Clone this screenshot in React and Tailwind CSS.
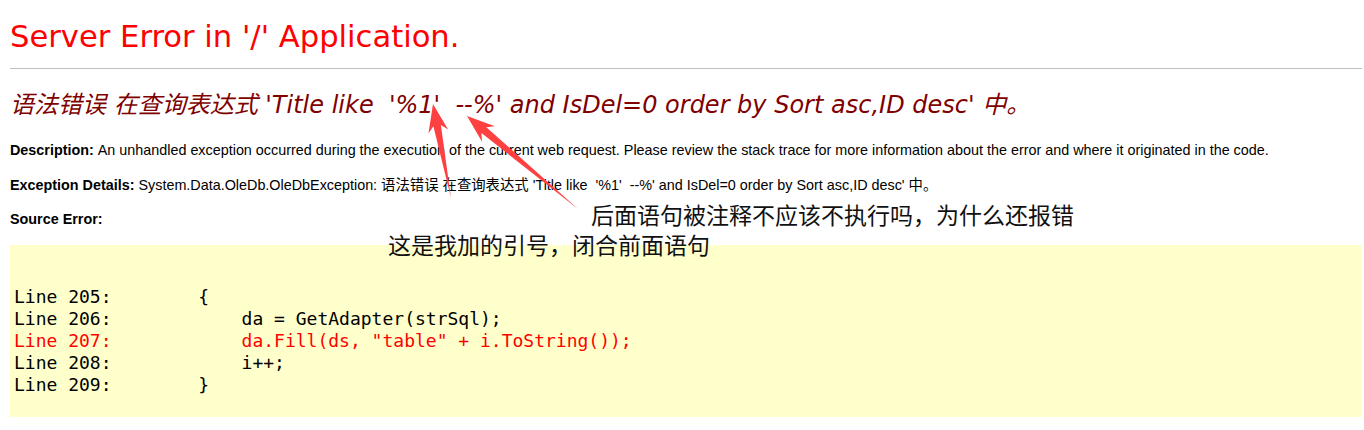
import React from "react";

const verdana = { fontFamily: '"DejaVu Sans", Verdana, "Noto Sans CJK SC", sans-serif' };

function Arrow({ x1, y1, x2, y2 }) {
  const dx = x2 - x1;
  const dy = y2 - y1;
  const len = Math.hypot(dx, dy);
  const ux = dx / len;
  const uy = dy / len;
  const px = -uy;
  const py = ux;
  const headLen = 28;
  const headW = 10;
  const neckW = 3.8;
  const notch = 6;
  const bx = x2 - ux * headLen;
  const by = y2 - uy * headLen;
  const nx = x2 - ux * (headLen - notch);
  const ny = y2 - uy * (headLen - notch);
  const pts = [
    [x1, y1],
    [nx + px * neckW, ny + py * neckW],
    [bx + px * headW, by + py * headW],
    [x2, y2],
    [bx - px * headW, by - py * headW],
    [nx - px * neckW, ny - py * neckW],
  ];
  return (
    <polygon
      points={pts.map((p) => p.join(",")).join(" ")}
      fill="#ff4040"
    />
  );
}

export default function App() {
  return (
    <div className="relative w-[1364px] h-[430px] overflow-hidden bg-white">
      <div className="pl-[10px] pr-[2px]">
        <h1
          className="text-[30.6px] leading-[36px] text-[#ff0000] pt-[19px]"
          style={verdana}
        >
          Server Error in '/' Application.
        </h1>
        <div className="mt-[13px] border-t border-[#c0c0c0]" />
        <h2
          className="mt-[21px] text-[24px] leading-[30px] italic text-[#800000] whitespace-pre"
          style={verdana}
        >
          语法错误 在查询表达式 'Title like  '%1'  --%' and IsDel=0 order by Sort asc,ID desc' 中。
        </h2>
        <div
          className="text-[14.37px] leading-[16px] text-black"
          style={{ fontFamily: '"Liberation Sans", Arial, "Noto Sans CJK SC", sans-serif' }}
        >
          <p className="mt-[22px]">
            <b>Description: </b>An unhandled exception occurred during the execution of the current web request. Please review the stack trace for more information about the error and where it originated in the code.
          </p>
          <p className="mt-[19px] whitespace-pre">
            <b>Exception Details: </b>System.Data.OleDb.OleDbException: 语法错误 在查询表达式 'Title like  '%1'  --%' and IsDel=0 order by Sort asc,ID desc' 中。
          </p>
          <p className="mt-[18px]">
            <b>Source Error:</b>
          </p>
        </div>
        <pre
          className="mt-[18px] bg-[#ffffcc] pl-[4px] pt-[41px] pb-[21px] text-[18px] leading-[22px] text-black"
          style={{ fontFamily: '"DejaVu Sans Mono", "Liberation Mono", monospace' }}
        >
{`Line 205:        {
Line 206:            da = GetAdapter(strSql);
`}<span className="text-[#ff0000]">{`Line 207:            da.Fill(ds, "table" + i.ToString());
`}</span>{`Line 208:            i++;
Line 209:        }`}
        </pre>
      </div>

      <svg className="absolute left-0 top-0" width="1364" height="430">
        <Arrow x1={451} y1={198} x2={433} y2={104} />
        <Arrow x1={578} y1={209} x2={467} y2={116} />
      </svg>

      <div
        className="absolute left-[591px] top-[200px] text-[23px] leading-[28px] text-[#111] whitespace-nowrap"
        style={{ fontFamily: '"Noto Sans CJK SC", sans-serif' }}
      >
        后面语句被注释不应该不执行吗，为什么还报错
      </div>
      <div
        className="absolute left-[388px] top-[230px] text-[23px] leading-[28px] text-[#111] whitespace-nowrap"
        style={{ fontFamily: '"Noto Sans CJK SC", sans-serif' }}
      >
        这是我加的引号，闭合前面语句
      </div>
    </div>
  );
}
